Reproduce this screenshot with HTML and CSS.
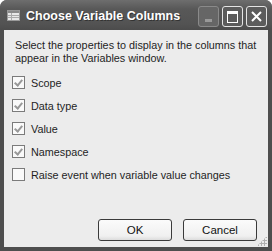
FILE: index.html
```
<!DOCTYPE html>
<html lang="en">
<head>
    <meta charset="UTF-8">
    <title>Choose Variable Columns</title>
    <link rel="stylesheet" href="styles.css">
</head>
<body>
    <div class="window">
        <div class="titlebar">
            <svg class="app-icon" width="13" height="11" viewBox="0 0 13 11">
                <rect x="0.5" y="0.5" width="12" height="10" fill="#e8e8e8" stroke="#999"/>
                <rect x="1" y="1" width="11" height="2" fill="#8a8a8a"/>
                <line x1="1" y1="5.5" x2="12" y2="5.5" stroke="#aaa"/>
                <line x1="1" y1="7.5" x2="12" y2="7.5" stroke="#aaa"/>
                <line x1="4.5" y1="3" x2="4.5" y2="10" stroke="#aaa"/>
            </svg>
            <span class="title">Choose Variable Columns</span>
            <div class="caption-buttons">
                <div class="cap-btn min"><span class="min-bar"></span></div>
                <div class="cap-btn max"><span class="max-box"></span></div>
                <div class="cap-btn close">
                    <svg width="13" height="13" viewBox="0 0 13 13">
                        <path d="M2 2 L11 11 M11 2 L2 11" stroke="#fff" stroke-width="2"/>
                    </svg>
                </div>
            </div>
        </div>
        <div class="content">
            <p class="intro">Select the properties to display in the columns that appear in the Variables window.</p>
            <div class="options">
                <label class="option"><span class="box checked"></span>Scope</label>
                <label class="option"><span class="box checked"></span>Data type</label>
                <label class="option"><span class="box checked"></span>Value</label>
                <label class="option"><span class="box checked"></span>Namespace</label>
                <label class="option"><span class="box"></span>Raise event when variable value changes</label>
            </div>
            <div class="actions">
                <button class="btn">OK</button>
                <button class="btn">Cancel</button>
            </div>
            <div class="grip"></div>
        </div>
    </div>
</body>
</html>
```

FILE: styles.css
```
html, body {
    margin: 0;
    padding: 0;
    width: 272px;
    height: 251px;
    overflow: hidden;
    background: #ffffff;
}
.window {
    width: 272px;
    height: 251px;
    box-sizing: border-box;
    display: flex;
    flex-direction: column;
    background: #4e4e4e;
    border-radius: 7px 7px 0 0;
}
.titlebar {
    height: 30px;
    flex: none;
    display: flex;
    align-items: center;
    padding: 0 5px 0 7px;
    background: linear-gradient(#6e6e6e, #585858 30%, #535353 80%, #4c4c4c);
    border-radius: 7px 7px 0 0;
}
.app-icon {
    flex: none;
    margin-right: 6px;
}
.title {
    color: #fff;
    font-family: "Liberation Sans", Arial, sans-serif;
    font-weight: bold;
    font-size: 12.5px;
    white-space: nowrap;
    text-shadow: 1px 1px 0 #333;
    margin-top: 2px;
    flex: 1;
}
.caption-buttons {
    display: flex;
    gap: 3px;
    margin-top: 3px;
}
.cap-btn {
    width: 19px;
    height: 19px;
    border: 1px solid #e4e4e4;
    border-radius: 3px;
    background: #5c5c5c;
    display: flex;
    align-items: center;
    justify-content: center;
}
.cap-btn.min {
    background: #666;
    border-color: #8a8a8a;
}
.min-bar {
    width: 7px;
    height: 3px;
    background: #999;
    margin-top: 8px;
}
.max-box {
    width: 9px;
    height: 8px;
    border: 1px solid #fff;
    border-top-width: 3px;
}
.content {
    flex: 1;
    margin: 0 4px 4px 4px;
    background: #ececec;
    position: relative;
    display: flex;
    flex-direction: column;
    color: #1e1e1e;
    font-family: "Liberation Sans", Arial, sans-serif;
    font-size: 10.8px;
}
.intro {
    margin: 9px 2px 0 11px;
    line-height: 13px;
}
.options {
    display: flex;
    flex-direction: column;
    gap: 10px;
    margin: 11px 0 0 8px;
}
.option {
    display: flex;
    align-items: center;
    gap: 6px;
    height: 13px;
}
.box {
    width: 11px;
    height: 11px;
    border: 1px solid #7b7b7b;
    background: #fafafa;
    position: relative;
}
.box.checked::after {
    content: "";
    position: absolute;
    left: 3px;
    top: 1px;
    width: 3px;
    height: 6px;
    border: solid #999;
    border-width: 0 2px 2px 0;
    transform: rotate(40deg);
}
.actions {
    margin-top: auto;
    display: flex;
    justify-content: flex-end;
    gap: 11px;
    padding: 0 11px 6px 0;
}
.btn {
    width: 74px;
    height: 22px;
    border: 1px solid #3a3a3a;
    border-radius: 3px;
    background: linear-gradient(#fbfbfb, #f0f0f0 80%, #dcdcdc);
    font-family: "Liberation Sans", Arial, sans-serif;
    font-size: 11.5px;
    color: #111;
    padding: 0;
}
.grip {
    position: absolute;
    right: 1px;
    bottom: 1px;
    width: 10px;
    height: 10px;
    background: radial-gradient(circle, #b0b0b0 1px, transparent 1.3px) 0 0 / 3px 3px;
    clip-path: polygon(100% 0, 100% 100%, 0 100%);
}
```
